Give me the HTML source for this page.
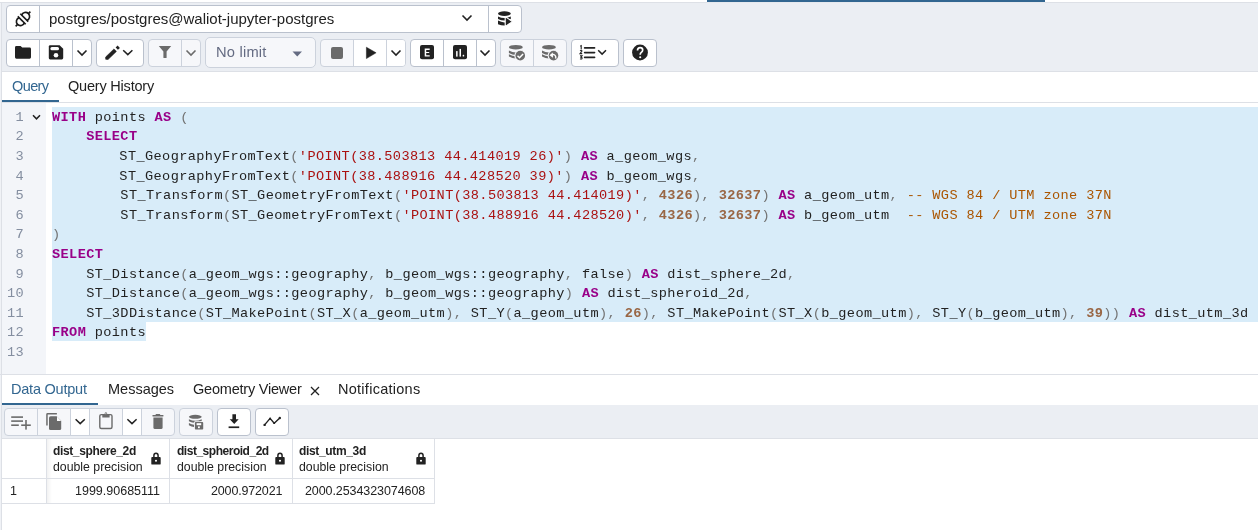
<!DOCTYPE html>
<html><head><meta charset="utf-8">
<style>
*{box-sizing:border-box;margin:0;padding:0}
html,body{width:1258px;height:530px;overflow:hidden;background:#fff}
.t,.ln,.gn,.hd{will-change:transform}
body{position:relative;font-family:"Liberation Sans",sans-serif;color:#222;font-size:14px}
.a{position:absolute}
.tb{position:absolute;background:#ebeef3}
.grp{position:absolute;border:1px solid #bac1cd;border-radius:4px;background:#fff;height:28px;overflow:hidden}
.grp.dis{background:#f6f7fa;border-color:#ccd2dc}
.sep{position:absolute;top:0;bottom:0;width:1px;background:#bac1cd}
.dis .sep{background:#ccd2dc}
.w{position:absolute;top:0;bottom:0;background:#fff}
.t{position:absolute;white-space:pre;line-height:1}
svg{position:absolute;overflow:visible}
.ln{position:absolute;left:52px;height:19.6px;line-height:19.6px;font-family:"Liberation Mono",monospace;font-size:13.6px;letter-spacing:0.389px;white-space:pre;color:#222}
.gn{position:absolute;left:2px;width:22px;text-align:right;height:19.6px;line-height:19.6px;font-family:"Liberation Mono",monospace;font-size:13.6px;letter-spacing:0.389px;color:#848ea0}
i{font-style:normal}
.k{color:#990088;font-weight:bold}
.s{color:#aa1111}
.n{color:#996644;font-weight:bold}
.c{color:#aa5500}
.p{color:#737373}
.hd{position:absolute;white-space:pre;line-height:1}
</style></head><body>
<!-- top strip -->
<div class="a" style="left:0;top:0;width:1258px;height:2px;background:#fff"></div>
<div class="a" style="left:707px;top:0;width:338px;height:2px;background:#326690"></div>
<div class="a" style="left:707px;top:2px;width:338px;height:1px;background:#e6e9ee"></div>
<div class="a" style="left:0;top:2px;width:707px;height:1px;background:#dde0e6"></div>
<div class="a" style="left:1045px;top:2px;width:213px;height:1px;background:#dde0e6"></div>
<!-- toolbar bg -->
<div class="tb" style="left:0;top:3px;width:1258px;height:68px"></div>
<div class="a" style="left:0;top:71px;width:1258px;height:1px;background:#dde0e6"></div>
<!-- connection bar -->
<div class="grp" style="left:6px;top:5px;width:516px">
  <div class="sep" style="left:32px"></div>
  <div class="sep" style="left:481px"></div>
</div>
<div class="t" style="left:48.5px;top:11.1px;font-size:15px">postgres/postgres@waliot-jupyter-postgres</div>
<!-- plug icon -->
<svg style="left:10.8px;top:6.8px" width="24" height="24" viewBox="0 0 24 24">
 <g transform="rotate(-45 12 12)" fill="none" stroke="#1a1a1a" stroke-width="1.65" stroke-linecap="butt">
  <line x1="10.2" y1="6.4" x2="10.2" y2="17.6"/>
  <line x1="13.8" y1="6.4" x2="13.8" y2="17.6"/>
  <path d="M10.2 8.3 A4.1 4.1 0 1 0 10.2 15.7"/>
  <path d="M13.8 8.3 A4.1 4.1 0 1 1 13.8 15.7"/>
  <line x1="4.3" y1="12" x2="1.6" y2="12"/>
  <line x1="19.7" y1="12" x2="22.4" y2="12"/>
 </g>
</svg>
<!-- chevron conn -->
<svg style="left:461px;top:14px" width="12" height="8" viewBox="0 0 12 8"><path d="M1.5 1.5 L6 6 L10.5 1.5" fill="none" stroke="#222" stroke-width="1.6"/></svg>
<!-- db play icon -->
<svg style="left:493px;top:7px" width="24" height="23" viewBox="0 0 24 23">
 <ellipse cx="11.4" cy="6.6" rx="6.4" ry="2.4" fill="#222"/>
 <path d="M5 9.4 Q11.4 12.6 17.8 9.4 V12 Q11.4 15.2 5 12 Z" fill="#222"/>
 <path d="M5 13.6 Q8.5 15.6 12 15.4 V18.4 Q8.5 18.6 5 17.2 Z" fill="#222"/>
 <path d="M12.2 9.6 L19.4 14.6 L12.2 19.6 Z" fill="#222" stroke="#fff" stroke-width="1.1" stroke-linejoin="round"/>
</svg>
<!-- row 2 toolbar -->
<div class="grp" style="left:6px;top:39px;width:86px">
  <div class="sep" style="left:32px"></div>
  <div class="sep" style="left:65px"></div>
</div>
<div class="grp" style="left:96px;top:39px;width:48px"></div>
<div class="grp dis" style="left:148px;top:39px;width:53px">
  <div class="sep" style="left:32px"></div>
</div>
<div class="grp dis" style="left:205px;top:37px;width:111px;height:31px;border-radius:5px"></div>
<div class="t" style="left:216px;top:44.9px;font-size:14.7px;letter-spacing:0.2px;color:#646b82">No limit</div>
<svg style="left:291.7px;top:50.7px" width="11" height="6" viewBox="0 0 11 6"><path d="M0.5 0.5 L10 0.5 L5.25 5.5Z" fill="#646b82"/></svg>
<div class="grp dis" style="left:320px;top:39px;width:86px">
  <div class="w" style="left:33px;width:53px"></div>
  <div class="sep" style="left:32px"></div>
  <div class="sep" style="left:65px"></div>
</div>
<div class="grp" style="left:410px;top:39px;width:86px">
  <div class="sep" style="left:32px"></div>
  <div class="sep" style="left:65px"></div>
</div>
<div class="grp dis" style="left:500px;top:39px;width:67px">
  <div class="sep" style="left:32px"></div>
</div>
<div class="grp" style="left:571px;top:39px;width:48px"></div>
<div class="grp" style="left:623px;top:39px;width:34px"></div>

<!-- row2 icons -->
<!-- folder -->
<svg style="left:14px;top:45px" width="18" height="15" viewBox="0 0 18 15"><path d="M1 2.4 Q1 1 2.4 1 H6.6 L8.2 2.6 H15.6 Q17 2.6 17 4 V12.3 Q17 13.7 15.6 13.7 H2.4 Q1 13.7 1 12.3 Z" fill="#222"/></svg>
<!-- save -->
<svg style="left:48px;top:44px" width="16" height="16" viewBox="0 0 16 16"><path d="M0.8 2.6 Q0.8 1.2 2.2 1.2 H11.6 L15.2 4.8 V14.1 Q15.2 15.5 13.8 15.5 H2.2 Q0.8 15.5 0.8 14.1 Z" fill="#222"/><rect x="2.4" y="2.9" width="8.6" height="3.3" rx="1.5" fill="#fff"/><circle cx="8" cy="11.3" r="2.3" fill="#fff"/></svg>
<svg style="left:76px;top:49px" width="12" height="8" viewBox="0 0 12 8"><path d="M1.5 1.5 L6 6 L10.5 1.5" fill="none" stroke="#222" stroke-width="1.6"/></svg>
<!-- pencil -->
<svg style="left:104px;top:44px" width="18" height="18" viewBox="0 0 18 18"><path d="M1.7 15.3 L1.6 13.1 L10 4.9 L12.4 7.4 L4 15.5 Z" fill="#222" stroke="#222" stroke-width="0.6" stroke-linejoin="round"/><path d="M15.9 3.9 L13.6 1.5 L11.6 3.4 L13.9 5.8 Z" fill="#222"/></svg>
<svg style="left:121.5px;top:49px" width="12" height="8" viewBox="0 0 12 8"><path d="M1.2 1.2 L5.8 5.6 L10.4 1.2" fill="none" stroke="#222" stroke-width="1.5"/></svg>
<!-- filter -->
<svg style="left:158px;top:45px" width="14" height="14" viewBox="0 0 14 14"><path d="M0.8 1 H13.2 L8.6 6.6 V12.4 Q8.6 13 8 13 H6 Q5.4 13 5.4 12.4 V6.6Z" fill="#6b6b6b"/></svg>
<svg style="left:185px;top:49px" width="12" height="8" viewBox="0 0 12 8"><path d="M1.5 1.5 L6 6 L10.5 1.5" fill="none" stroke="#6b6b6b" stroke-width="1.6"/></svg>
<!-- stop -->
<svg style="left:331px;top:47px" width="12" height="12" viewBox="0 0 12 12"><rect x="0" y="0" width="12" height="12" rx="2" fill="#6b6b6b"/></svg>
<!-- play -->
<svg style="left:366px;top:47px" width="11" height="12" viewBox="0 0 11 12"><path d="M0.4 0.2 L10.1 5.8 L0.4 11.6Z" fill="#222" stroke="#222" stroke-width="0.5" stroke-linejoin="round"/></svg>
<svg style="left:390px;top:49px" width="12" height="8" viewBox="0 0 12 8"><path d="M1.5 1.5 L6 6 L10.5 1.5" fill="none" stroke="#222" stroke-width="1.6"/></svg>
<!-- E -->
<svg style="left:420px;top:45.3px" width="15" height="15" viewBox="0 0 15 15"><rect x="0" y="0" width="14" height="14.2" rx="2" fill="#222"/><path d="M4.7 3.6 H9.7 V4.9 H6.2 V6.9 H9.2 V8.1 H6.2 V10.3 H9.7 V11.6 H4.7Z" fill="#fff"/></svg>
<!-- chart -->
<svg style="left:453px;top:45.3px" width="15" height="15" viewBox="0 0 15 15"><rect x="0" y="0" width="14" height="14.2" rx="2" fill="#222"/><rect x="3.1" y="6.1" width="1.5" height="5.5" fill="#fff"/><rect x="6.5" y="3.9" width="1.5" height="7.7" fill="#fff"/><rect x="9.7" y="9.8" width="1.5" height="1.8" rx="0.5" fill="#fff"/></svg>
<svg style="left:479px;top:49px" width="12" height="8" viewBox="0 0 12 8"><path d="M1.5 1.5 L6 6 L10.5 1.5" fill="none" stroke="#222" stroke-width="1.6"/></svg>
<!-- commit/rollback -->
<svg style="left:0;top:0" width="1258" height="80" viewBox="0 0 1258 80">
 <g fill="#6b6b6b">
  <ellipse cx="515.85" cy="47.2" rx="6.9" ry="2.3"/>
  <path d="M508.9 50.6 Q515.85 54.6 522.8 50.6 V52.9 Q515.85 56.9 508.9 52.9 Z"/>
  <path d="M508.9 54.3 Q515.85 58.3 522.8 54.3 V56.6 Q515.85 60.6 508.9 56.6 Z"/>
  <circle cx="520.25" cy="55.65" r="5.9" fill="#f6f7fa"/>
  <circle cx="520.25" cy="55.65" r="4.8"/>
  <ellipse cx="548.95" cy="47.2" rx="6.9" ry="2.3"/>
  <path d="M542 50.6 Q548.95 54.6 555.9 50.6 V52.9 Q548.95 56.9 542 52.9 Z"/>
  <path d="M542 54.3 Q548.95 58.3 555.9 54.3 V56.6 Q548.95 60.6 542 56.6 Z"/>
  <circle cx="553.5" cy="55.6" r="5.9" fill="#f6f7fa"/>
  <circle cx="553.5" cy="55.6" r="4.8"/>
 </g>
 <path d="M517.5 55.8 L519.5 57.7 L523.1 54" fill="none" stroke="#fff" stroke-width="1.5"/>
 <path d="M551.6 55.2 Q554 53.6 555.5 56 Q556 57 555.7 58.6" fill="none" stroke="#fff" stroke-width="1.4"/>
 <path d="M549.5 55.3 L552.8 52.6 L553 57.8 Z" fill="#fff"/>
</svg>
<!-- macros list -->
<svg style="left:571px;top:38px" width="40" height="30" viewBox="0 0 40 30">
 <g fill="none" stroke="#222" stroke-width="1.1">
  <path d="M9.2 8.2 L10.2 7.6 V11.4"/>
  <path d="M9 12.8 Q10.6 12 11 13 L9 15.6 H11.2"/>
  <path d="M9 17.8 H11 L9.9 19.1 Q11.4 19.3 11 20.6 Q10.5 21.3 9 20.8"/>
 </g>
 <g stroke="#222" stroke-width="1.6" stroke-linecap="round">
  <line x1="13.6" y1="9.9" x2="23.6" y2="9.9"/>
  <line x1="13.6" y1="14.6" x2="23.6" y2="14.6"/>
  <line x1="13.6" y1="19.4" x2="23.6" y2="19.4"/>
 </g>
 <path d="M27.2 12.2 L31.1 16.1 L35 12.2" fill="none" stroke="#222" stroke-width="1.5"/>
</svg>
<!-- help -->
<svg style="left:624px;top:38px" width="32" height="30" viewBox="0 0 32 30"><circle cx="16" cy="14.5" r="7.9" fill="#222"/><path d="M13.5 12.5 Q13.6 9.7 16.1 9.7 Q18.7 9.7 18.7 12.1 Q18.7 13.6 17.2 14.4 Q16.2 15 16.2 16.8" fill="none" stroke="#fff" stroke-width="1.7"/><circle cx="16.2" cy="19.2" r="1.05" fill="#fff"/></svg>

<!-- Query tabs -->
<div class="t" style="left:11.5px;top:79px;font-size:14.5px;letter-spacing:-0.6px;color:#326690">Query</div>
<div class="t" style="left:68.4px;top:79px;font-size:14.5px;letter-spacing:-0.2px">Query History</div>
<div class="a" style="left:2px;top:100px;width:57px;height:2px;background:#326690"></div>
<div class="a" style="left:0;top:102px;width:1258px;height:1px;background:#dde0e6"></div>
<!-- left border -->
<div class="a" style="left:0;top:3px;width:1px;height:527px;background:#f0f2f6"></div>
<div class="a" style="left:1px;top:3px;width:1px;height:527px;background:#dde0e6"></div>

<!-- editor -->
<div class="a" style="left:2px;top:103px;width:44px;height:271px;background:#f3f5f9"></div>
<div class="a" style="left:52px;top:106.8px;width:1206px;height:215.6px;background:#d8ecf9"></div>
<div class="a" style="left:52px;top:322.4px;width:94px;height:18.3px;background:#d8ecf9"></div>
<div class="ln" style="top:107.80px"><i class="k">WITH</i> points <i class="k">AS</i> <i class="p">(</i></div>
<div class="gn" style="top:107.80px">1</div>
<div class="ln" style="top:127.40px">    <i class="k">SELECT</i></div>
<div class="gn" style="top:127.40px">2</div>
<div class="ln" style="top:147.00px;left:51px">        ST_GeographyFromText<i class="p">(</i><i class="s">&#x27;POINT(38.503813 44.414019 26)&#x27;</i><i class="p">)</i> <i class="k">AS</i> a_geom_wgs<i class="p">,</i></div>
<div class="gn" style="top:147.00px">3</div>
<div class="ln" style="top:166.60px;left:51px">        ST_GeographyFromText<i class="p">(</i><i class="s">&#x27;POINT(38.488916 44.428520 39)&#x27;</i><i class="p">)</i> <i class="k">AS</i> b_geom_wgs<i class="p">,</i></div>
<div class="gn" style="top:166.60px">4</div>
<div class="ln" style="top:186.20px">        ST_Transform<i class="p">(</i>ST_GeometryFromText<i class="p">(</i><i class="s">&#x27;POINT(38.503813 44.414019)&#x27;</i><i class="p">,</i> <i class="n">4326</i><i class="p">)</i><i class="p">,</i> <i class="n">32637</i><i class="p">)</i> <i class="k">AS</i> a_geom_utm<i class="p">,</i> <i class="c">-- WGS 84 / UTM zone 37N</i></div>
<div class="gn" style="top:186.20px">5</div>
<div class="ln" style="top:205.80px">        ST_Transform<i class="p">(</i>ST_GeometryFromText<i class="p">(</i><i class="s">&#x27;POINT(38.488916 44.428520)&#x27;</i><i class="p">,</i> <i class="n">4326</i><i class="p">)</i><i class="p">,</i> <i class="n">32637</i><i class="p">)</i> <i class="k">AS</i> b_geom_utm  <i class="c">-- WGS 84 / UTM zone 37N</i></div>
<div class="gn" style="top:205.80px">6</div>
<div class="ln" style="top:225.40px"><i class="p">)</i></div>
<div class="gn" style="top:225.40px">7</div>
<div class="ln" style="top:245.00px"><i class="k">SELECT</i></div>
<div class="gn" style="top:245.00px">8</div>
<div class="ln" style="top:264.60px">    ST_Distance<i class="p">(</i>a_geom_wgs::geography<i class="p">,</i> b_geom_wgs::geography<i class="p">,</i> false<i class="p">)</i> <i class="k">AS</i> dist_sphere_2d<i class="p">,</i></div>
<div class="gn" style="top:264.60px">9</div>
<div class="ln" style="top:284.20px">    ST_Distance<i class="p">(</i>a_geom_wgs::geography<i class="p">,</i> b_geom_wgs::geography<i class="p">)</i> <i class="k">AS</i> dist_spheroid_2d<i class="p">,</i></div>
<div class="gn" style="top:284.20px">10</div>
<div class="ln" style="top:303.80px">    ST_3DDistance<i class="p">(</i>ST_MakePoint<i class="p">(</i>ST_X<i class="p">(</i>a_geom_utm<i class="p">)</i><i class="p">,</i> ST_Y<i class="p">(</i>a_geom_utm<i class="p">)</i><i class="p">,</i> <i class="n">26</i><i class="p">)</i><i class="p">,</i> ST_MakePoint<i class="p">(</i>ST_X<i class="p">(</i>b_geom_utm<i class="p">)</i><i class="p">,</i> ST_Y<i class="p">(</i>b_geom_utm<i class="p">)</i><i class="p">,</i> <i class="n">39</i><i class="p">)</i><i class="p">)</i> <i class="k">AS</i> dist_utm_3d</div>
<div class="gn" style="top:303.80px">11</div>
<div class="ln" style="top:323.40px"><i class="k">FROM</i> points</div>
<div class="gn" style="top:323.40px">12</div>
<div class="ln" style="top:343.00px"></div>
<div class="gn" style="top:343.00px">13</div>
<svg style="left:32px;top:114px" width="9" height="7" viewBox="0 0 9 7"><path d="M1 1.2 L4.5 4.8 L8 1.2" fill="none" stroke="#222" stroke-width="1.5"/></svg>
<div class="a" style="left:0;top:374px;width:1258px;height:1px;background:#dde0e6"></div>

<!-- bottom tabs -->
<div class="t" style="left:11.3px;top:381.6px;font-size:14.5px;letter-spacing:-0.22px;color:#326690">Data Output</div>
<div class="t" style="left:107.6px;top:381.6px;font-size:14.5px">Messages</div>
<div class="t" style="left:193px;top:382.3px;font-size:14.5px;letter-spacing:-0.214px">Geometry Viewer</div>
<svg style="left:310px;top:385.5px" width="10" height="10" viewBox="0 0 10 10"><path d="M1 1 L9 9 M9 1 L1 9" stroke="#222" stroke-width="1.3"/></svg>
<div class="t" style="left:338px;top:381.8px;font-size:14.5px;letter-spacing:0.267px">Notifications</div>
<div class="a" style="left:2px;top:403px;width:96px;height:2px;background:#326690"></div>

<!-- data toolbar -->
<div class="tb" style="left:2px;top:405px;width:1256px;height:33px"></div>
<div class="grp dis" style="left:4px;top:408px;width:171px">
  <div class="w" style="left:66px;width:19px"></div>
  <div class="w" style="left:118px;width:19px"></div>
  <div class="sep" style="left:32px"></div>
  <div class="sep" style="left:65px"></div>
  <div class="sep" style="left:84px"></div>
  <div class="sep" style="left:117px"></div>
  <div class="sep" style="left:136px"></div>
</div>
<div class="grp dis" style="left:179px;top:408px;width:34px"></div>
<div class="grp" style="left:217px;top:408px;width:34px"></div>
<div class="grp" style="left:255px;top:408px;width:34px"></div>

<!-- data toolbar icons -->
<svg style="left:0;top:400px" width="300" height="40" viewBox="0 400 300 40">
 <g fill="#6b6b6b">
  <rect x="11.2" y="416.3" width="11.8" height="1.6"/>
  <rect x="11.2" y="420.3" width="11.8" height="1.6"/>
  <rect x="11.2" y="424.4" width="7.6" height="1.6"/>
  <rect x="21.2" y="424.4" width="9.6" height="1.6"/>
  <rect x="25.2" y="420" width="1.6" height="9.6"/>
  <path d="M50.6 416.2 H56.6 L61.2 420.8 V428.4 Q61.2 430 59.6 430 H50.6 Q49 430 49 428.4 V417.8 Q49 416.2 50.6 416.2 Z"/>
  <path d="M46.2 425.4 V414.4 Q46.2 413 47.6 413 H56.9 V414.5 H47.7 V425.4 Z"/>
  <rect x="99.8" y="414.6" width="12.2" height="13.9" rx="1.5" fill="none" stroke="#6b6b6b" stroke-width="1.4"/>
  <path d="M102.3 414.3 H104.5 Q104.6 412.3 105.9 412.3 Q107.2 412.3 107.3 414.3 H109.6 V417.4 H102.3 Z"/><circle cx="105.9" cy="413.6" r="0.55" fill="#f6f7fa"/>
  <rect x="152.4" y="415" width="11.1" height="1.5" rx="0.4"/>
  <rect x="155.6" y="414" width="4.6" height="1.5" rx="0.5"/>
  <path d="M153.4 417.6 H162.6 V427.4 Q162.6 428.9 161.1 428.9 H154.9 Q153.4 428.9 153.4 427.4 Z"/>
  <ellipse cx="195.3" cy="416.8" rx="6.4" ry="2"/>
  <path d="M188.9 419.3 Q195.3 422.4 201.7 419.3 V421.2 Q195.3 424.3 188.9 421.2 Z"/>
  <path d="M188.9 423 Q191.6 424.6 194 424.8 V426.9 Q191.6 426.8 188.9 425.2 Z"/>
  <rect x="194.1" y="421.3" width="9.9" height="9" rx="1.2" fill="#f6f7fa"/>
  <rect x="194.9" y="422.1" width="8.3" height="7.4" rx="0.8"/>
 </g>
 <rect x="196.6" y="423.2" width="4.6" height="2" fill="#fff"/>
 <rect x="198" y="426.4" width="1.8" height="1.8" fill="#fff"/>
 <path d="M57 416.4 V421 H61.2 Z" fill="#fff"/>
 <path d="M232.4 414.3 H236 V419.2 H238.7 L234.2 424 L229.7 419.2 H232.4 Z" fill="#222"/>
 <rect x="228.6" y="426.4" width="10.6" height="1.7" fill="#222"/>
 <path d="M264.6 424.9 L270.1 418.4 L274.2 423.2 L279.8 418" fill="none" stroke="#222" stroke-width="1.4" stroke-linejoin="round"/>
 <circle cx="264.6" cy="424.9" r="1.2" fill="#222"/>
 <circle cx="279.8" cy="418" r="1.2" fill="#222"/>
 <circle cx="270.1" cy="418.4" r="0.9" fill="#222"/>
 <circle cx="274.2" cy="423.2" r="0.9" fill="#222"/>
 <path d="M75.6 419.2 L80.2 423.6 L84.8 419.2" fill="none" stroke="#222" stroke-width="1.5"/>
 <path d="M127.4 419.2 L132 423.6 L136.6 419.2" fill="none" stroke="#222" stroke-width="1.5"/>
</svg>
<!-- grid -->
<div class="a" style="left:2px;top:438px;width:1256px;height:1px;background:#dde0e6"></div>
<div class="a" style="left:46px;top:439px;width:1px;height:65px;background:#dde0e6"></div>
<div class="a" style="left:47px;top:439px;width:5px;height:64px;background:linear-gradient(to right,rgba(0,0,0,0.05),rgba(0,0,0,0))"></div>
<div class="a" style="left:169px;top:439px;width:1px;height:65px;background:#dde0e6"></div>
<div class="a" style="left:292px;top:439px;width:1px;height:65px;background:#dde0e6"></div>
<div class="a" style="left:434px;top:439px;width:1px;height:65px;background:#dde0e6"></div>
<div class="a" style="left:2px;top:478px;width:433px;height:1px;background:#dde0e6"></div>
<div class="a" style="left:2px;top:503px;width:433px;height:1px;background:#dde0e6"></div>

<div class="hd" style="left:53.4px;top:444.7px;font-size:12px;letter-spacing:-0.369px;font-weight:bold">dist_sphere_2d</div>
<div class="hd" style="left:53.4px;top:460.6px;font-size:12.3px">double precision</div>
<div class="hd" style="left:176.6px;top:444.7px;font-size:12px;letter-spacing:-0.48px;font-weight:bold">dist_spheroid_2d</div>
<div class="hd" style="left:176.6px;top:460.6px;font-size:12.3px">double precision</div>
<div class="hd" style="left:299.3px;top:444.7px;font-size:12px;letter-spacing:-0.34px;font-weight:bold">dist_utm_3d</div>
<div class="hd" style="left:299.3px;top:460.6px;font-size:12.3px">double precision</div>

<svg style="left:151px;top:452px" width="10" height="13" viewBox="0 0 10 13"><path d="M2.9 5.6 V3.6 Q2.9 1.2 5 1.2 Q7.1 1.2 7.1 3.6 V5.6" fill="none" stroke="#222" stroke-width="1.5"/><rect x="0.3" y="5" width="9.4" height="7.6" rx="0.9" fill="#222"/><circle cx="5" cy="8.8" r="1.05" fill="#fff"/></svg>
<svg style="left:275px;top:452px" width="10" height="13" viewBox="0 0 10 13"><path d="M2.9 5.6 V3.6 Q2.9 1.2 5 1.2 Q7.1 1.2 7.1 3.6 V5.6" fill="none" stroke="#222" stroke-width="1.5"/><rect x="0.3" y="5" width="9.4" height="7.6" rx="0.9" fill="#222"/><circle cx="5" cy="8.8" r="1.05" fill="#fff"/></svg>
<svg style="left:416px;top:452px" width="10" height="13" viewBox="0 0 10 13"><path d="M2.9 5.6 V3.6 Q2.9 1.2 5 1.2 Q7.1 1.2 7.1 3.6 V5.6" fill="none" stroke="#222" stroke-width="1.5"/><rect x="0.3" y="5" width="9.4" height="7.6" rx="0.9" fill="#222"/><circle cx="5" cy="8.8" r="1.05" fill="#fff"/></svg>

<div class="hd" style="left:9.8px;top:484.9px;font-size:12.5px">1</div>
<div class="hd" style="left:74.7px;top:484.9px;font-size:12.5px">1999.90685111</div>
<div class="hd" style="left:210.9px;top:484.9px;font-size:12.5px;letter-spacing:-0.16px">2000.972021</div>
<div class="hd" style="left:304.7px;top:484.9px;font-size:12.5px;letter-spacing:-0.082px">2000.2534323074608</div>
</body></html>
